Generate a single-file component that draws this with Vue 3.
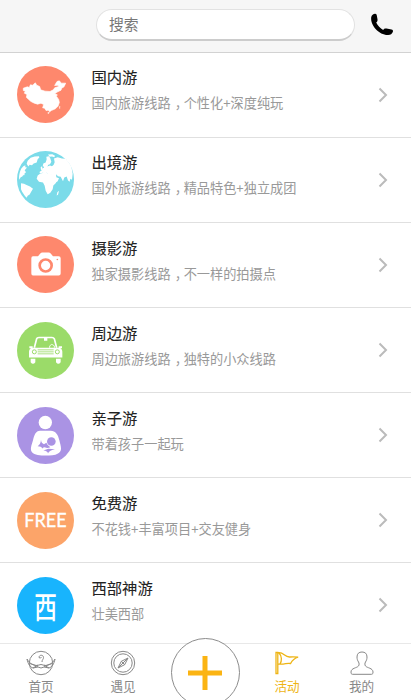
<script setup>
const items = [
  { icon: 'china', color: '#fe886d', title: '国内游', desc: ['国内旅游线路', '个性化+深度纯玩'] },
  { icon: 'globe', color: '#7bdbe9', title: '出境游', desc: ['国外旅游线路', '精品特色+独立成团'] },
  { icon: 'camera', color: '#fe886d', title: '摄影游', desc: ['独家摄影线路', '不一样的拍摄点'] },
  { icon: 'car', color: '#9bdb69', title: '周边游', desc: ['周边旅游线路', '独特的小众线路'] },
  { icon: 'family', color: '#aa93e4', title: '亲子游', desc: ['带着孩子一起玩'] },
  { icon: 'free', color: '#fca469', title: '免费游', desc: ['不花钱+丰富项目+交友健身'] },
  { icon: 'west', color: '#18b4fd', title: '西部神游', desc: ['壮美西部'] },
]
</script>

<template>
  <div class="screen">
    <header class="top">
      <div class="search">搜索</div>
      <svg class="phone" viewBox="0 0 24 24">
        <path d="M1.200 4.200C1.600 1.800 3.600.6 5.200.7c1.100.1 1.500.9 1.600 1.900l.7 3.600c.2 1.800-.3 2.700-1.300 3.300 1.500 3 4 5.700 7 7.400.9-1.400 2-1.700 3.400-1.400l4.900 1.100c1.300.3 1.700 1.100 1.400 2.200-.7 2.200-2.800 3.400-5.200 3.200C9.200 21.900.2 12.500 1.200 4.200Z" />
      </svg>
    </header>

    <main class="list">
      <section v-for="item in items" :key="item.title" class="row">
        <svg class="badge" viewBox="21 18.500 171 171">
          <circle cx="106.500" cy="104" r="85.500" :fill="item.color" />
          <g v-if="item.icon === 'china'" fill="#fff" stroke="#fff" stroke-width="2" stroke-linejoin="round">
            <path d="M40 85L52 81 58 83 61 75 68 76 76 69 80 76 89 80 92 90 105 94 120 95 130 90 134 84 146 80 144 76 134 77 141 65 148 63 154 70 167 70 162 81 155 85 153 91 143 96 134 102 142 105 139 109 146 119 148 128 144 139 136 147 124 152 119 156 115 151 108 152 104 145 98 144 101 134 93 130 83 133 73 130 63 125 55 118 49 112 51 104 43 100 46 94 40 92Z" />
            <path d="M113 159l4-2 1 2-3 3zM148 141l2-2-1 8z" stroke-width="1" />
          </g>
          <g v-else-if="item.icon === 'globe'" fill="#fff">
            <path d="M50 57l3-9 9-9 12-4 13-1 1 4-5 5-3 10-9 3-5 5-7-1-4 5zM34 71l6-7 6-3 0 6 5 1-7 8 4 6-7 6-4 7-5 2-4 8-1-8c1-11 3-18 7-26zM33 115l9 2 6 3 12 5 9 7-5 8-5 9-6 4-3 6c-7-8-13-16-17-26z" />
            <path d="M98 64l2-8 7-3 3-10-1-7 8-2 4 7 3 10-4 7-5 2-3 5 8-3 6 2 5-4 3-8-2-11 11-4 13 4 11 1c8 9 15 17 18 28l3 17-2 18-5-3-2 9-5-4-4-12-7 3-4 11-7-13-8-2-6-6 1 9 8 3-4 9-9 6-4-13-6-12-9-2-5-4-7 3-4-3-10 1 0-4 5-3 4-8 4-1-1-4z" />
            <path d="M114 29l13-1 8 5-2 4-7-2-7 1z" />
            <path d="M91 86l14-3 12 4 12 2 5 13 7 4-4 9-7 7-2 11-7 11-8 4-6-10-3-15-5-10-12-2-7-9 3-10z" />
            <path d="M142 142l5-4-3 12-4 2zM92 67l4-3 2 9-5 3zM37 89l8-3-3 6z" />
          </g>
          <g v-else-if="item.icon === 'camera'">
            <path d="M69 79h15l7-8q2-3 6-3h19q4 0 6 3l7 8h17q6 0 6 6v46q0 6-6 6H69q-5 0-5-6V85q0-6 5-6Z" fill="#fff" />
            <circle cx="107" cy="107" r="18" fill="none" stroke="#fe886d" stroke-width="8" />
            <circle cx="142" cy="89" r="2.500" fill="#fe886d" />
          </g>
          <g v-else-if="item.icon === 'car'">
            <path d="M73 96l7-27q1-4 7-4h39q5 0 7 4l7 27" fill="none" stroke="#fff" stroke-width="5" />
            <path d="M102 66h10v9h-10zM58 91h10v6H58zM146 91h10v6h-10zM66 96h82q9 3 9 12v17H57v-17q0-9 9-12ZM62 129h14v10q-7 9-14 0zM138 129h14v10q-7 9-14 0z" fill="#fff" />
            <path d="M119 96v-6q6-9 14 0v6" fill="none" stroke="#fff" stroke-width="2.500" />
            <circle cx="73" cy="108" r="6" fill="none" stroke="#9bdb69" stroke-width="3" />
            <circle cx="142" cy="108" r="6" fill="none" stroke="#9bdb69" stroke-width="3" />
            <path d="M83 102h48M83 108h48M83 114h48" stroke="#9bdb69" stroke-width="2.500" />
          </g>
          <g v-else-if="item.icon === 'family'">
            <circle cx="106" cy="65" r="20" fill="#fff" />
            <path d="M90 90h32c15 0 22 12 26 28 5 20 10 32-4 40-9 6-24 6-36 6-18 0-34-2-42-10-7-9-1-22 3-36 4-15 8-28 21-28Z" fill="#fff" />
            <circle cx="124" cy="122" r="13" fill="#aa93e4" />
            <path d="M93 117q1 11 9 13l7-4q4 9 12 13-9 4-15 1-4-3-9 3-3-7-14-7 9-5 10-19zM115 144l20 1q-19 4-21 13-1-8-14-9z" fill="#aa93e4" />
          </g>
          <text v-else-if="item.icon === 'free'" class="free" x="43" y="125" textLength="127" lengthAdjust="spacingAndGlyphs">FREE</text>
          <text v-else class="west" x="0" y="0" transform="translate(107 142) scale(.92 1.200)">西</text>
        </svg>
        <div class="copy">
          <h2>{{ item.title }}</h2>
          <p>{{ item.desc[0] }}<template v-if="item.desc[1]"><span class="comma">，</span>{{ item.desc[1] }}</template></p>
        </div>
        <svg class="chevron" viewBox="0 0 10 16"><path d="M1.500 1.500L8 8l-6.500 6.500" /></svg>
      </section>
    </main>

    <nav class="tabs">
      <div class="tab home">
        <svg viewBox="0 0 30 26">
          <circle cx="15" cy="13" r="11.700" />
          <path d="M13 7.500c0-3 4.500-3 4.500 0 0 2-1.500 2-1.500 4.500M13 7.500q1.500 1.500 2.500-.5M1 9c3 5 6 6 10 6.500l4-1 4 1c4-.5 7-1.500 10-6.500-1 5-3 8-6 9l-5-1-3 1-3-1-5 1c-3-1-5-4-6-9ZM4 13.500l8 3M26 13.500l-8 3M7 18l5-3M23 18l-5-3" />
        </svg>
        <span>首页</span>
      </div>
      <div class="tab meet">
        <svg viewBox="0 0 30 26">
          <circle cx="15" cy="13" r="11.700" /><circle cx="15" cy="13" r="9.200" />
          <path d="M20 8l-3.300 6.700L10 18l3.300-6.700ZM13.300 11.300l3.400 3.400M20 8L10 18" />
        </svg>
        <span>遇见</span>
      </div>
      <div class="plus"><svg viewBox="0 0 34 34"><path d="M17 0v34M0 17h34" /></svg></div>
      <div class="tab active">
        <svg viewBox="0 0 30 26">
          <path d="M4 2.500h1.800v21H4ZM5.800 3c5-2 7 4.500 12 4 3-.3 5.500-.2 8.300.2-3.500 1-6 3.500-7.500 6.300-4-1-6 1.500-12.800.5M7 3c3 3 3 8 1 11" />
        </svg>
        <span>活动</span>
      </div>
      <div class="tab mine">
        <svg viewBox="0 0 30 26">
          <path d="M11.500 12c-1-1.500-1.500-3-1.500-5 0-3.500 2-5 5-5s5 1.500 5 5c0 2-.5 3.500-1.500 5-.8 1.200-.8 3 0 4 1.500 2 7.500 2 7.500 6 0 1.500-.3 2.300-1.500 2.300h-19C4.300 24.300 4 23.500 4 22c0-4 6-4 7.500-6 .8-1 .8-2.800 0-4Z" />
        </svg>
        <span>我的</span>
      </div>
    </nav>
  </div>
</template>

<style>
body { margin: 0; }
</style>

<style scoped>
* { box-sizing: border-box; }
.screen {
  width: 411px; height: 700px; overflow: hidden;
  display: flex; flex-direction: column;
  background: #fff;
  font-family: "Noto Sans CJK SC", sans-serif;
}
.top {
  height: 53px; flex: none; display: flex; align-items: flex-start;
  padding: 9px 16px 0 96px; background: #f6f6f6; border-bottom: 1.500px solid #d2d2d2;
}
.search {
  width: 259px; height: 32px; border-radius: 16px; background: #fff;
  border: 1px solid #e2e2e2; border-bottom: 2px solid #ccc;
  padding-left: 12px; font-size: 14.800px; line-height: 28px; color: #777;
}
.phone { width: 24px; height: 24px; margin: 4px 0 0 15px; }
.list { height: 590px; flex: none; overflow: hidden; }
.row {
  height: 85.080px; display: flex; align-items: flex-start;
  padding: 13px 23px 0 17px; border-bottom: 1px solid #e0e0e0;
}
.row:last-child { border: 0; }
.badge { width: 57px; height: 57px; flex: none; margin-top: .3px; }
.free { font: 58px Lato, sans-serif; fill: #fff; stroke: #fff; stroke-width: 1; }
.west { font: 500 74px "Noto Sans CJK SC", sans-serif; fill: #fff; text-anchor: middle; }
.copy { flex: 1; padding-left: 17.500px; }
h2, p { margin: 0; font-weight: 400; white-space: nowrap; }
h2 { margin-top: -.6px; font-size: 15.300px; line-height: 22px; color: #222; -webkit-text-stroke: .1px #222; }
p { margin-top: 6px; font-size: 13.200px; line-height: 20px; color: #999; }
.comma { display: inline-block; width: 13px; padding-left: 4px; font-feature-settings: "halt"; }
.chevron { width: 10px; height: 16px; margin-top: 21px; }
.chevron path { fill: none; stroke: #bbb; stroke-width: 2; }
.tabs {
  height: 57px; flex: none; display: grid;
  grid-template-columns: 82px 82px 82px 82px 67px; padding-right: 16px;
  background: #fff; border-top: 1.500px solid #e8e8e8;
}
.tab {
  display: flex; flex-direction: column; align-items: center;
  padding-top: 6px; color: #888; font-size: 12.600px; line-height: 18px;
}
.tab svg { width: 30px; height: 26px; fill: none; stroke: currentColor; stroke-width: 1; margin-bottom: 1px; }
.active { color: #eeb414; }
.active svg { stroke-width: 1.300; }
.plus {
  width: 69px; height: 69px; margin: -6px auto 0; border: 1px solid #8c8c8c; border-radius: 50%;
  background: #fff; display: grid; place-items: center;
}
.plus svg { width: 34px; height: 34px; }
.plus path { stroke: #fbb413; stroke-width: 5; }
</style>
